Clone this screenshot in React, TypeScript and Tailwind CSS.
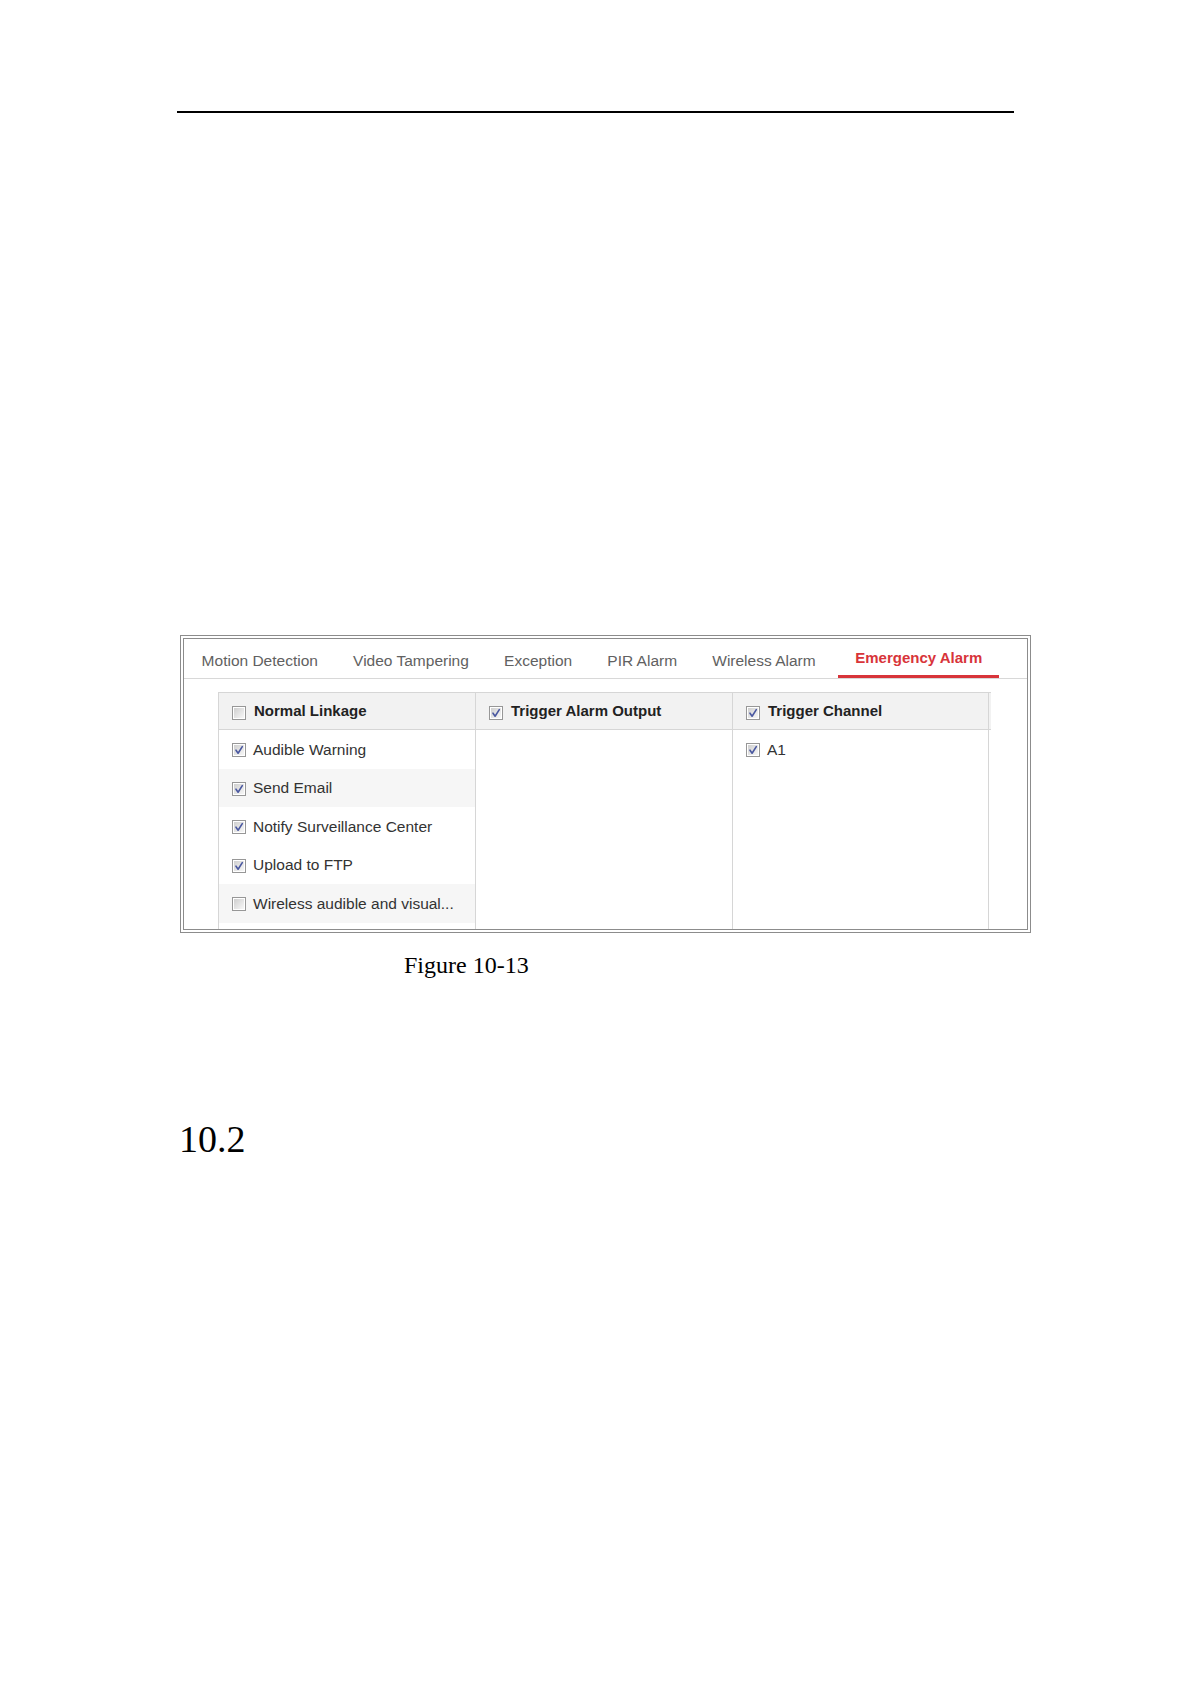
import clsx from 'clsx';

const tabs = [
  'Motion Detection',
  'Video Tampering',
  'Exception',
  'PIR Alarm',
  'Wireless Alarm',
  'Emergency Alarm',
];

const normalLinkage = [
  { label: 'Audible Warning', checked: true },
  { label: 'Send Email', checked: true, shaded: true },
  { label: 'Notify Surveillance Center', checked: true },
  { label: 'Upload to FTP', checked: true },
  { label: 'Wireless audible and visual...', checked: false, shaded: true },
];

const Box = ({ checked, className }: { checked: boolean; className?: string }) => (
  <svg width="14" height="14" viewBox="0 0 14 14" className={clsx('shrink-0', className)}>
    <defs>
      <linearGradient id="cbg" x1="0" y1="0" x2="1" y2="1">
        <stop offset="0" stopColor="#cfcfcf" />
        <stop offset="1" stopColor="#f7f7f7" />
      </linearGradient>
    </defs>
    <rect x="0.5" y="0.5" width="13" height="13" fill="#fff" stroke="#979797" />
    <rect x="2" y="2" width="10" height="10" fill="url(#cbg)" />
    {checked && (
      <path
        d="M4 7.2 L6.1 10.2 L10.3 3.6"
        fill="none"
        stroke="#4a58a0"
        strokeWidth="1.6"
        strokeLinecap="round"
        strokeLinejoin="round"
      />
    )}
  </svg>
);

const Row = ({ label, checked, shaded }: { label: string; checked: boolean; shaded?: boolean }) => (
  <div className={clsx('h-[38.5px] flex items-center gap-[7px] pl-[13px]', shaded && 'bg-[#f6f6f6]')}>
    <Box checked={checked} className="mt-[2px]" />
    <span className="text-[15.5px] text-[#333] whitespace-nowrap">{label}</span>
  </div>
);

const HeaderCell = ({ label, last }: { label: string; last?: boolean }) => (
  <div
    className={clsx(
      'w-[257px] h-[36px] flex items-center gap-[8px] pl-[13px] border-l border-[#d6d6d6]',
      last && 'border-r',
    )}
  >
    <Box checked={label !== 'Normal Linkage'} className="mt-[3px]" />
    <span className="text-[15px] font-bold text-[#222] whitespace-nowrap">{label}</span>
  </div>
);

export default function App() {
  return (
    <div className="w-[1191px] h-[1684px] bg-white overflow-hidden font-['Liberation_Sans',Arial,sans-serif]">
      {/* header rule */}
      <div className="pt-[111px]">
        <div className="ml-[177px] w-[837px] h-[2px] bg-black" />
      </div>

      {/* screenshot frame */}
      <div className="mt-[522px] ml-[180px] w-[851px] h-[298px] border border-[#8c8c8c] p-[2px] bg-white">
        <div className="h-full border border-[#8c8c8c] overflow-hidden flex flex-col">
          {/* tab bar */}
          <div className="h-[40px] shrink-0 border-b border-[#d8d8d8] flex pl-[0px]">
            {tabs.map((t) =>
              t === 'Emergency Alarm' ? (
                <div
                  key={t}
                  className="ml-[5px] h-[39px] px-[17px] pt-[10px] border-b-[3px] border-[#d8343a] text-[15px] font-bold text-[#d8343a] leading-[18px] whitespace-nowrap"
                >
                  {t}
                </div>
              ) : (
                <div
                  key={t}
                  className="h-[39px] px-[17.6px] pt-[13px] text-[15.5px] text-[#616161] leading-[18px] whitespace-nowrap"
                >
                  {t}
                </div>
              ),
            )}
          </div>

          {/* linkage table */}
          <div className="mt-[13px] ml-[34px] w-[773px] flex-1 flex flex-col">
            <div className="flex bg-[#f2f2f2] border-t border-b border-[#d6d6d6]">
              <HeaderCell label="Normal Linkage" />
              <HeaderCell label="Trigger Alarm Output" />
              <HeaderCell label="Trigger Channel" last />
            </div>
            <div className="flex flex-1">
              <div className="w-[257px] border-l border-[#d6d6d6]">
                {normalLinkage.map((r) => (
                  <Row key={r.label} {...r} />
                ))}
              </div>
              <div className="w-[257px] border-l border-[#d6d6d6]" />
              <div className="w-[257px] border-l border-r border-[#d6d6d6]">
                <Row label="A1" checked />
              </div>
            </div>
          </div>
        </div>
      </div>

      {/* caption */}
      <div className="mt-[20px] ml-[404px] font-['Liberation_Serif','Times_New_Roman',serif] text-[24px] leading-[24px] text-black">
        Figure 10-13
      </div>

      <div className="mt-[143px] ml-[179px] font-['Liberation_Serif','Times_New_Roman',serif] text-[38px] leading-[38px] text-black">
        10.2
      </div>
    </div>
  );
}
